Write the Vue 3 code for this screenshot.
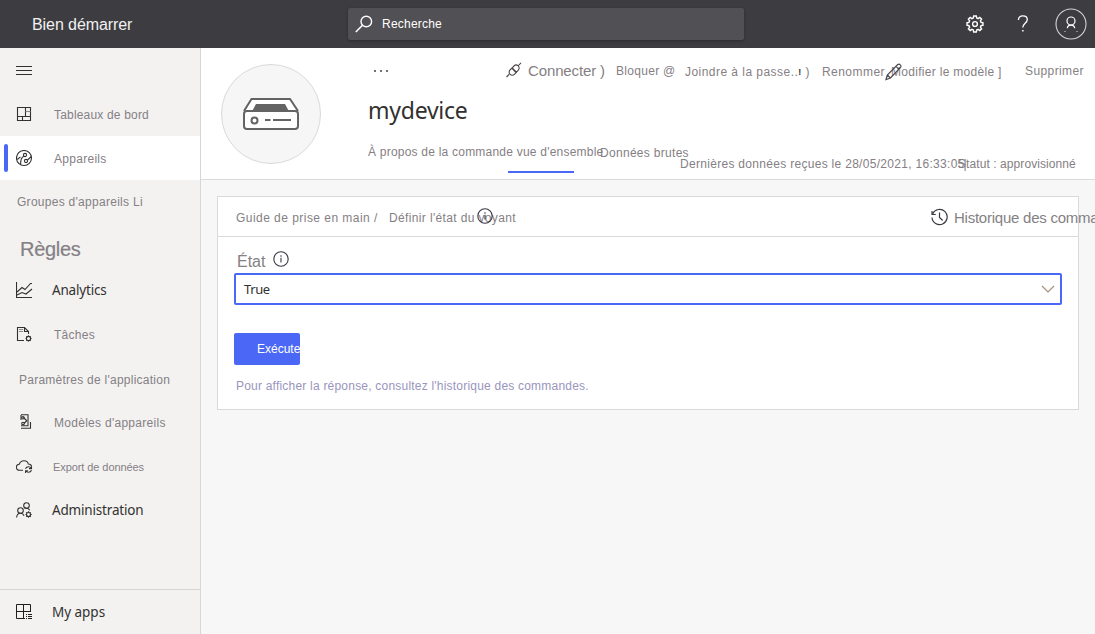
<script setup>
const nav = [
  { id: 'boards', label: 'Tableaux de bord', icon: 'boards' },
  { id: 'devices', label: 'Appareils', icon: 'devices', active: true },
  { id: 'groups', label: "Groupes d'appareils Li" },
  { id: 'rules', label: 'Règles' },
  { id: 'analytics', label: 'Analytics', icon: 'analytics', dark: true },
  { id: 'jobs', label: 'Tâches', icon: 'jobs' },
  { id: 'params', label: "Paramètres de l'application" },
  { id: 'templates', label: "Modèles d'appareils", icon: 'templates' },
  { id: 'export', label: 'Export de données', icon: 'export' },
  { id: 'admin', label: 'Administration', icon: 'admin', dark: true },
]
</script>

<template>
  <div class="app">
    <header class="topbar">
      <span class="brand">Bien démarrer</span>
      <div class="search">
        <svg width="18" height="18" viewBox="0 0 18 18" fill="none" stroke="#fff" stroke-width="1.4">
          <circle cx="11.3" cy="6.5" r="5.3" /><path d="M7.5 10.3L.8 17" stroke-width="1.6" />
        </svg>
        <span class="search-text">Recherche</span>
      </div>
      <svg class="gear" width="18" height="18" viewBox="0 0 18 18" fill="none" stroke="#fff" stroke-width="1.4">
        <path d="M7.7 1h2.6l.4 2 1.4.6 1.7-1.2 1.8 1.8-1.2 1.7.6 1.4 2 .4v2.6l-2 .4-.6 1.4 1.2 1.7-1.8 1.8-1.7-1.2-1.4.6-.4 2H7.7l-.4-2-1.4-.6-1.7 1.2-1.8-1.8 1.2-1.7-.6-1.4-2-.4V7.7l2-.4.6-1.4-1.2-1.7 1.8-1.8 1.7 1.2 1.4-.6z" />
        <circle cx="9" cy="9" r="2.4" />
      </svg>
      <svg class="help" width="12" height="18" viewBox="0 0 12 18" fill="none" stroke="#fff" stroke-width="1.3">
        <path d="M1.400 5c0-2.600 1.800-4.200 4.400-4.200S10.300 2.300 10.300 4.500c0 3.600-4.500 4-4.500 8" /><path d="M5.100 15.700h1.500" stroke-width="1.600" />
      </svg>
      <svg class="avatar" width="32" height="32" viewBox="0 0 32 32" fill="none" stroke="#fff">
        <circle cx="16" cy="16" r="15" stroke="#d4d4d6" stroke-width="1.100" />
        <circle cx="16" cy="13" r="4" stroke-width="1.200" />
        <path d="M12.300 20.300c.2-2.200 1.500-3.200 3.700-3.200s3.500 1 3.700 3.200" stroke-width="1.200" />
        <path d="M9 23.500h2M21 23.500h2" stroke="#8d8c90" />
      </svg>
    </header>

    <div class="body">
      <nav class="sidebar">
        <div class="row">
          <svg class="icon" width="18" height="18" viewBox="0 0 18 18" stroke="#323130"><path d="M0 4.500h16M0 8.500h16M0 12.500h16" /></svg>
        </div>
        <div v-for="item in nav" :key="item.id" class="row" :class="[item.id, { active: item.active }]">
          <svg v-if="item.icon" class="icon" width="18" height="18" viewBox="0 0 18 18" fill="none" stroke="#323130" stroke-width="1.100">
            <g v-if="item.icon === 'boards'">
              <path d="M1.500 1.500h13v13h-13zM1.500 10.500h13M9.500 1.500v9M6.500 10.500v4" /><path d="M9.500 5.500h5" stroke="#888" />
            </g>
            <g v-else-if="item.icon === 'devices'">
              <circle cx="8" cy="8" r="7.500" /><circle cx="9" cy="5" r="1.600" /><circle cx="10" cy="11" r="1.600" />
              <path d="M7.800 6.300C5.500 7.500 4.500 9 4.600 14M1.300 9.500l3.200-2.700M11.500 10l3.800-3.500" />
            </g>
            <g v-else-if="item.icon === 'analytics'">
              <path d="M.5 0v15.500H16M1 10l5-4.500 3 2 5.500-6H16M1 13l5-2.500 4 1.500 6-5" />
            </g>
            <g v-else-if="item.icon === 'jobs'">
              <path d="M8 14.500H1.500v-13h7l4 4V8M8.500 1.500v4h4" /><path d="M3 3.500h4M3 5.500h4" stroke="#888" />
              <circle cx="12.500" cy="12.500" r="2.100" /><path d="M12.500 9.500v1M12.500 14.500v1M9.600 12.500h1M14.500 12.500h1M10.400 10.400l.7.7M14 14l.7.7M14.600 10.400l-.7.7M10.400 14.600l.7-.7" />
            </g>
            <g v-else-if="item.icon === 'templates'">
              <path d="M5 .8h7v11H5M5 14.300h9.500V8" /><path d="M5 1v5M7.500 3.500L11 7M8 9.500l3-3" /><circle cx="7" cy="3.800" r="1.200" /><circle cx="7" cy="9.500" r="1.300" />
            </g>
            <g v-else-if="item.icon === 'export'" transform="translate(0 .8)">
              <path d="M7 11.500H3.500a3 3 0 0 1-.3-6C4 3.300 5.500 2 8 2s4 1.500 4.300 3.200c1.900.1 3 1 3.200 2.300" />
              <path d="M9.500 10c.5-1.300 1.700-2 3-2 1.200 0 2.100.6 2.700 1.500M15.500 7.500v2.300H13M15.500 11.500c-.5 1.300-1.700 2-3 2-1.200 0-2.100-.6-2.700-1.500M9.600 14.300V12H12" />
            </g>
            <g v-else>
              <circle cx="4.500" cy="8.500" r="2.800" /><circle cx="10.500" cy="3.500" r="2.800" />
              <path d="M.6 15.500c.2-2.700 1.700-4.200 3.900-4.200 1.800 0 3 .9 3.600 2.400M8.500 6.200c1-.3 3.900-.3 5.200 2" />
              <circle cx="12.500" cy="12.500" r="2" /><path d="M12.500 9.300v1.200M12.500 14.500v1.200M9.500 12.500h1M14.500 12.500h1.200M10.300 10.300l.8.800M14 14l.8.800M14.700 10.300l-.8.800M10.300 14.700l.8-.8" />
            </g>
          </svg>
          <span class="label" :class="{ dark: item.dark }">{{ item.label }}</span>
        </div>
        <div class="row apps">
          <svg class="icon" width="18" height="18" viewBox="0 0 18 18" fill="none" stroke="#201f1e">
            <path d="M9 14.500H.5v-14h14V8M.5 7.500h14M7.500 .5v14" /><path d="M10 10.500h1M12 10.500h4M10 12.500h1M12 12.500h4M10 14.500h1M12 14.500h4" />
          </svg>
          <span class="label dark">My apps</span>
        </div>
      </nav>

      <main class="main">
        <section class="device">
          <div class="thumb">
            <svg width="58" height="34" viewBox="0 0 58 34" fill="#fff" stroke="#636363" stroke-width="2">
              <path d="M2 14L9.500 2h38.500L56 14" /><path d="M10.500 13.500L14 7h29l3.500 6.500z" fill="#636363" stroke="none" />
              <rect x="2" y="14" width="54" height="18" rx="3" /><circle cx="12.500" cy="23.500" r="3" /><path d="M23 23h5.500M31 23h18" />
            </svg>
          </div>
          <div class="info">
            <div class="toolbar">
              <span class="dots"><i></i><i></i><i></i></span>
              <span class="connect">
                <svg width="16" height="16" viewBox="0 0 16 16" fill="none" stroke="#4a4645" stroke-width="1.100">
                  <path d="M.5 15l2.500-2.500M12.500 3.500L15 .8M5.800 6.200L4 8a3 3 0 0 0 4.400 4.300L10 10.700zM6.200 5.800L8 4a3 3 0 0 1 4.300 4.200l-1.800 1.900z" />
                </svg>
                <span class="connect-text">Connecter )</span>
              </span>
              <span class="block">Bloquer @</span>
              <span class="attach">Joindre à la passe..<b>!</b> )</span>
              <span class="rename">Renommer</span>
              <span class="modify">Modifier le modèle ]
                <svg class="pencil" width="18" height="18" viewBox="0 0 18 18" fill="none" stroke="#4b4950" stroke-width="1.200">
                  <path d="M1 16.500l1.300-4.500L12.500 1.800c1-.9 2-.9 2.800 0 .9.900.9 1.900 0 2.800L5.500 15zM2.300 12L5.500 15M11 3.300l3 3" />
                </svg>
              </span>
              <span class="delete">Supprimer</span>
            </div>
            <h1>mydevice</h1>
            <div class="tabs">
              <span class="tab1">À propos de la commande vue d'ensemble</span>
              <span class="tab2">Données brutes</span>
              <span class="last">Dernières données reçues le 28/05/2021, 16:33:05<i>|</i></span>
              <span class="status">Statut : approvisionné</span>
            </div>
            <div class="underline"></div>
          </div>
        </section>

        <section class="card">
          <div class="card-head">
            <span class="crumb1">Guide de prise en main /</span>
            <span class="crumb2">Définir l'état du voyant
              <svg class="tip" width="16" height="16" viewBox="0 0 16 16" fill="none" stroke="#3b3544" stroke-width="1.100"><circle cx="8" cy="8" r="7.200" /><path d="M8 6.800v4.700M8 4.300v1.400" /></svg>
            </span>
            <span class="history">
              <svg width="18" height="18" viewBox="0 0 18 18" fill="none" stroke="#3b3940" stroke-width="1.200"><path d="M1 3v3.500h3.800M1.700 5.800A7.600 7.600 0 1 1 1 9.500M8.500 4.500v5l3.200 3" /></svg>
              <span class="history-text">Historique des commandes</span>
            </span>
          </div>
          <div class="card-body">
            <div class="field">
              <span class="field-label">État</span>
              <svg width="16" height="16" viewBox="0 0 16 16" fill="none" stroke="#3b3544" stroke-width="1.100"><circle cx="8" cy="8" r="7.200" /><path d="M8 6.800v4.700M8 4.300v1.400" /></svg>
            </div>
            <div class="select">
              <span>True</span>
              <svg width="14" height="8" viewBox="0 0 14 8" fill="none" stroke="#a78e77" stroke-width="1.200"><path d="M1 1l6 6 6-6" /></svg>
            </div>
            <button class="run"><span>Exécuter</span></button>
            <p class="note">Pour afficher la réponse, consultez l'historique des commandes.</p>
          </div>
        </section>
      </main>
    </div>
  </div>
</template>

<style>
body { overflow: hidden; }
</style>

<style scoped>
.app { width: 1095px; height: 634px; overflow: hidden; display: flex; flex-direction: column; background: #f7f7f7; font-family: "Liberation Sans", Arial, sans-serif; font-size: 12px; color: #858084; white-space: nowrap; }
svg { display: block; flex: none; }
.topbar { height: 48px; flex: none; background: #3d3c41; display: flex; align-items: center; color: #fff; }
.brand { width: 316px; padding: 2px 0 0 32px; font-size: 16px; letter-spacing: -.08px; color: #f1f1f1; }
.search { width: 396px; height: 32px; border-radius: 2px; background: #515054; display: flex; align-items: center; padding-left: 7px; box-sizing: border-box; box-shadow: 0 1px 3px rgba(0, 0, 0, .3); }
.search-text { margin-left: 9px; letter-spacing: .22px; }
.gear { margin-left: 222px; }
.help { margin-left: 33px; }
.avatar { margin-left: 26px; }
.body { flex: 1; display: flex; min-height: 0; }
.sidebar { width: 200px; flex: none; background: #f3f2f1; border-right: 1px solid #d6d6d6; display: flex; flex-direction: column; }
.row { height: 44px; flex: none; display: flex; align-items: center; padding-left: 16px; box-sizing: border-box; position: relative; }
.icon { margin: 2px 20px 0 0; }
.label { padding-top: 2px; }
.label.dark { padding-top: 0; font-family: "Noto Sans", "Open Sans", sans-serif; font-size: 13.500px; letter-spacing: -.18px; color: #323130; margin-left: -2px; }
.apps .label.dark { letter-spacing: -.03px; }
.active { background: #fff; }
.active::before { content: ""; position: absolute; left: 4px; top: 8px; width: 4px; height: 28px; border-radius: 2px; background: #4a68f5; }
.boards .label { letter-spacing: .18px; }
.devices .label, .jobs .label, .templates .label { letter-spacing: .28px; }
.groups { padding-left: 17px; letter-spacing: .28px; }
.groups .label { padding-top: 0; }
.rules { padding-left: 20px; padding-top: 5px; font-size: 20px; letter-spacing: -.3px; -webkit-text-stroke: .2px #858084; }
.params { padding-left: 19px; padding-top: 2px; letter-spacing: .25px; }
.export .label { font-size: 11px; margin-left: -1px; letter-spacing: -.08px; }
.apps { margin-top: auto; height: 45px; border-top: 1px solid #d6d6d6; }
.main { flex: 1; min-width: 0; }
.device { height: 131px; background: #fff; border-bottom: 1px solid #dadada; display: flex; padding-left: 20px; }
.thumb { width: 98px; height: 98px; flex: none; margin-top: 16px; border: 1px solid #dadada; border-radius: 50%; background: #f6f6f6; display: flex; align-items: center; justify-content: center; }
.info { margin-left: 47px; flex: 1; min-width: 0; }
.toolbar { height: 46px; display: grid; grid-template-columns: 138px 110px 69px 137px 69px 134px 70px; align-items: center; letter-spacing: .3px; }
.dots { display: flex; gap: 4px; padding-left: 6px; }
.dots i { width: 2px; height: 2px; background: #77716f; }
.connect { display: flex; align-items: center; padding-bottom: 2px; }
.connect-text { font-size: 15px; margin-left: 6px; letter-spacing: -.13px; }
.attach { letter-spacing: .46px; padding-top: 1px; }
.attach b { font-size: 9px; color: #323130; position: relative; top: -1px; }
.rename { padding-top: 1px; letter-spacing: .45px; }
.modify { position: relative; padding-top: 1px; }
.delete { letter-spacing: .4px; }
.pencil { position: absolute; left: -6px; top: -1px; }
h1 { margin: -1px 0 0; font: 400 23px/34px "Noto Sans", "Open Sans", sans-serif; letter-spacing: -.25px; color: #323130; }
.tabs { height: 44px; display: grid; grid-template-columns: 232px 80px 278px 130px; align-items: center; letter-spacing: .3px; }
.tab1 { letter-spacing: .22px; padding-top: 5px; }
.tab2 { padding-top: 7px; }
.last, .status { padding-top: 29px; }
.last i { font-style: normal; margin-left: -1px; }
.status { letter-spacing: .08px; }
.underline { width: 66px; height: 2px; margin-left: 140px; background: #4a68f5; }
.card { width: 862px; height: 214px; box-sizing: border-box; margin: 16px 0 0 16px; background: #fff; border: 1px solid #dadada; }
.card-head { height: 39px; border-bottom: 1px solid #dadada; display: grid; grid-template-columns: 153px 542px 165px; padding-left: 18px; align-items: center; letter-spacing: .36px; }
.crumb1 { letter-spacing: .46px; padding-top: 2px; }
.crumb2 { position: relative; padding-top: 2px; }
.tip { position: absolute; left: 88px; top: -1px; }
.history { display: flex; align-items: center; }
.history-text { font-size: 15px; margin-left: 5px; padding-top: 2px; letter-spacing: -.24px; }
.card-body { padding: 12px 16px 0; }
.field { height: 24px; display: flex; padding-left: 3px; gap: 8px; }
.field svg { margin-top: 2px; }
.field-label { font-size: 16px; padding-top: 4px; }
.select { height: 32px; width: 828px; box-sizing: border-box; border: 2px solid #4a68f5; border-radius: 2px; display: flex; align-items: center; justify-content: space-between; padding: 0 5px 0 8px; color: #323130; font: 13px "Noto Sans", "Open Sans", sans-serif; letter-spacing: -.4px; }
.run { display: block; width: 66px; height: 32px; margin-top: 28px; padding: 0 0 0 23px; border: 0; border-radius: 2px; background: #4a68f5; color: #fff; font: 12px "Liberation Sans", Arial, sans-serif; overflow: hidden; text-align: left; }
.note { margin: 14px 0 0 2px; color: #9995bd; letter-spacing: .21px; }
</style>
